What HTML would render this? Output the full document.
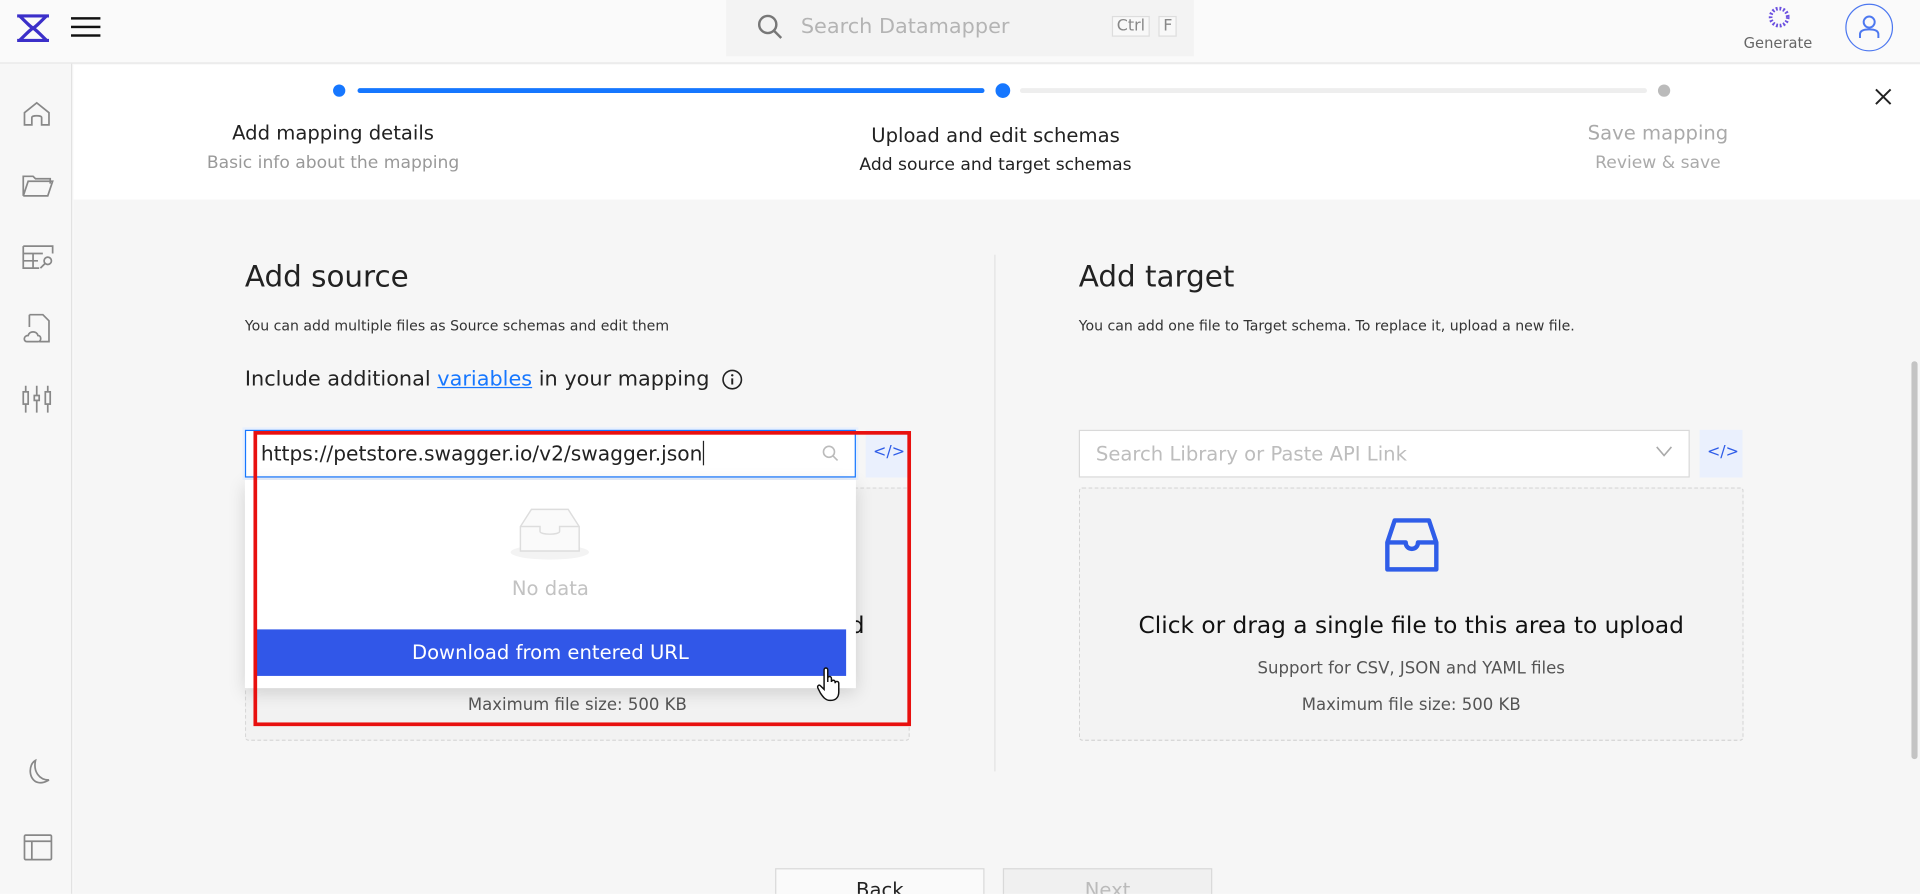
<!DOCTYPE html>
<html><head><meta charset="utf-8"><style>
*{box-sizing:border-box;margin:0;padding:0}
html,body{width:1920px;height:894px;overflow:hidden;background:#fafafa;font-family:"DejaVu Sans","Liberation Sans",sans-serif}
#w{position:absolute;left:0;top:0;width:1568px;height:730px;overflow:hidden;transform:scale(1.22449);transform-origin:0 0;background:#fafafa}
.a{position:absolute}
.t{position:absolute;white-space:nowrap}
</style></head><body><div id="w">
<div class="a" style="left:0;top:0;width:1568px;height:52px;background:#fafafa;border-bottom:1px solid #e4e4e4"></div>
<svg class="a" style="left:13px;top:10px" width="28" height="26" viewBox="0 0 28 26"><path d="M1 3 H27 M1 23 H27 M3 3 C10 10 12 12 14 13 C16 14 18 16 25 23 M25 3 C18 10 16 12 14 13 C12 14 10 16 3 23" stroke="#3b2fc9" stroke-width="2.6" fill="none"/></svg>
<div class="a" style="left:58px;top:14px;width:24px;height:2px;background:#111"></div>
<div class="a" style="left:58px;top:21px;width:24px;height:2px;background:#111"></div>
<div class="a" style="left:58px;top:28px;width:24px;height:2px;background:#111"></div>
<div class="a" style="left:593px;top:0;width:382px;height:46px;background:#f3f3f3"></div>
<svg class="a" style="left:618px;top:11px" width="22" height="22" viewBox="0 0 22 22"><circle cx="9" cy="9" r="7" stroke="#777" stroke-width="2" fill="none"/><path d="M14 14 L20 20" stroke="#777" stroke-width="2"/></svg>
<div class="t" style="left:654px;top:12px;font-size:17px;color:#b4b4b4">Search Datamapper</div>
<div class="t" style="left:908px;top:13px;font-size:13px;color:#888;border:1px solid #ddd;padding:0 3px;background:#f8f8f8">Ctrl</div>
<div class="t" style="left:946px;top:13px;font-size:13px;color:#888;border:1px solid #ddd;padding:0 3px;background:#f8f8f8">F</div>
<svg class="a" style="left:1442px;top:3px" width="22" height="22" viewBox="0 0 22 22"><circle cx="11" cy="11" r="7" stroke="#6a4fe0" stroke-width="3" stroke-dasharray="1.5 1.5" fill="none"/></svg>
<div class="t" style="left:1424px;top:28px;font-size:12px;color:#666">Generate</div>
<div class="a" style="left:1507px;top:3px;width:39px;height:39px;border:1.5px solid #4d78f0;border-radius:50%"></div>
<svg class="a" style="left:1514px;top:10px" width="25" height="25" viewBox="0 0 25 25"><circle cx="12.5" cy="8" r="4.5" stroke="#4d78f0" stroke-width="1.6" fill="none"/><path d="M5 21 V18 C5 15 8 14 12.5 14 C17 14 20 15 20 18 V21" stroke="#4d78f0" stroke-width="1.6" fill="none"/></svg>
<div class="a" style="left:0;top:52px;width:59px;height:678px;background:#f7f7f7;border-right:1px solid #e2e2e2"></div>
<svg class="a" style="left:17px;top:80px" width="26" height="26" viewBox="0 0 26 26" fill="none" stroke="#888" stroke-width="1.4"><path d="M3 22 V12 L13 4 L23 12 V22 H17 V16 C17 14 9 14 9 16 V22 Z"/></svg>
<svg class="a" style="left:17px;top:140px" width="28" height="22" viewBox="0 0 28 22" fill="none" stroke="#888" stroke-width="1.4"><path d="M2 20 V4 H10 L12 6 H24 V10 M2 20 H22 L26 8 H6 L2 20"/></svg>
<svg class="a" style="left:17px;top:199px" width="28" height="22" viewBox="0 0 28 22" fill="none" stroke="#888" stroke-width="1.4"><path d="M2 2 H26 V8 M2 2 V20 H15 M2 8 H18 M2 14 H14 M10 8 V20"/><circle cx="22" cy="14" r="3"/><path d="M20 16 L16 20"/></svg>
<svg class="a" style="left:18px;top:255px" width="26" height="26" viewBox="0 0 26 26" fill="none" stroke="#888" stroke-width="1.4"><path d="M6 2 H17 L22 7 V24 H14 M6 2 V12"/><path d="M4 24 C1 24 1 19 5 19 C6 15 12 15 13 19 C16 19 16 24 13 24 Z"/></svg>
<svg class="a" style="left:17px;top:314px" width="26" height="24" viewBox="0 0 26 24" fill="none" stroke="#888" stroke-width="1.4"><path d="M4 1 V23 M13 1 V23 M22 1 V23"/><rect x="2" y="6" width="4" height="10" fill="#f7f7f7"/><rect x="11" y="9" width="4" height="4" fill="#f7f7f7"/><rect x="20" y="6" width="4" height="10" fill="#f7f7f7"/></svg>
<svg class="a" style="left:19px;top:619px" width="24" height="24" viewBox="0 0 24 24" fill="none" stroke="#888" stroke-width="1.4"><path d="M10 2 C4 5 4 18 12 20 C16 21 19 19 21 18 C13 18 8 11 10 2 Z"/></svg>
<svg class="a" style="left:18px;top:680px" width="26" height="24" viewBox="0 0 26 24" fill="none" stroke="#888" stroke-width="1.4"><rect x="2" y="2" width="22" height="20" rx="1"/><path d="M2 7 H24 M8 7 V22"/></svg>
<div class="a" style="left:60px;top:53px;width:1508px;height:110px;background:#fff"></div>
<div class="a" style="left:272px;top:69px;width:10px;height:10px;border-radius:50%;background:#1677ff"></div>
<div class="a" style="left:292px;top:72px;width:512px;height:4px;border-radius:2px;background:#1677ff"></div>
<div class="a" style="left:813px;top:68px;width:12px;height:12px;border-radius:50%;background:#1677ff"></div>
<div class="a" style="left:833px;top:72px;width:512px;height:4px;border-radius:2px;background:#eee"></div>
<div class="a" style="left:1354px;top:69px;width:10px;height:10px;border-radius:50%;background:#bbb"></div>
<div class="t" style="left:132px;top:99px;width:280px;text-align:center;font-size:16px;color:#222">Add mapping details</div>
<div class="t" style="left:132px;top:125px;width:280px;text-align:center;font-size:14px;color:#999">Basic info about the mapping</div>
<div class="t" style="left:663px;top:101px;width:300px;text-align:center;font-size:16px;color:#222">Upload and edit schemas</div>
<div class="t" style="left:663px;top:127px;width:300px;text-align:center;font-size:14px;color:#222">Add source and target schemas</div>
<div class="t" style="left:1254px;top:99px;width:200px;text-align:center;font-size:16px;color:#aaa">Save mapping</div>
<div class="t" style="left:1254px;top:125px;width:200px;text-align:center;font-size:14px;color:#aaa">Review &amp; save</div>
<svg class="a" style="left:1531px;top:72px" width="14" height="14" viewBox="0 0 14 14"><path d="M1 1 L13 13 M13 1 L1 13" stroke="#222" stroke-width="1.6"/></svg>
<div class="a" style="left:60px;top:163px;width:1508px;height:567px;background:#f6f6f6"></div>
<div class="a" style="left:1561px;top:295px;width:5px;height:325px;background:#c4c4c4;border-radius:3px"></div>
<div class="a" style="left:812px;top:208px;width:1px;height:422px;background:#e2e2e2"></div>
<div class="t" style="left:200px;top:212px;font-size:24px;color:#222">Add source</div>
<div class="t" style="left:200px;top:259px;font-size:11.5px;color:#333">You can add multiple files as Source schemas and edit them</div>
<div class="t" style="left:200px;top:300px;font-size:17px;color:#222">Include additional <span style="color:#1677ff;text-decoration:underline">variables</span> in your mapping</div>
<svg class="a" style="left:589px;top:301px" width="18" height="18" viewBox="0 0 18 18"><circle cx="9" cy="9" r="7.5" stroke="#222" stroke-width="1.3" fill="none"/><path d="M9 8 V13" stroke="#222" stroke-width="1.6"/><circle cx="9" cy="5.5" r="1" fill="#222"/></svg>
<div class="t" style="left:881px;top:212px;font-size:24px;color:#222">Add target</div>
<div class="t" style="left:881px;top:259px;font-size:11.5px;color:#333">You can add one file to Target schema. To replace it, upload a new file.</div>
<div class="a" style="left:200px;top:398px;width:543px;height:207px;background:#f2f2f2;border:1px dashed #d8d8d8;border-radius:3px"></div>
<div class="t" style="left:200px;top:568px;width:543px;text-align:center;font-size:13.5px;color:#555">Maximum file size: 500 KB</div>
<div class="t" style="left:694px;top:500px;font-size:19px;color:#111">d</div>
<div class="a" style="left:198px;top:349px;width:503px;height:43px;background:#e8f0fd"></div>
<div class="a" style="left:200px;top:351px;width:499px;height:39px;background:#fff;border:1px solid #1677ff"></div>
<div class="t" style="left:213px;top:360px;font-size:16.5px;color:#222">https://petstore.swagger.io/v2/swagger.json<span style="display:inline-block;width:1px;height:20px;background:#222;vertical-align:-4px"></span></div>
<svg class="a" style="left:671px;top:363px" width="14" height="14" viewBox="0 0 14 14"><circle cx="6" cy="6" r="4.5" stroke="#bbb" stroke-width="1.3" fill="none"/><path d="M9.3 9.3 L13 13" stroke="#bbb" stroke-width="1.3"/></svg>
<div class="a" style="left:707px;top:351px;width:35px;height:39px;background:#eaf0fd"></div>
<div class="t" style="left:713px;top:362px;font-size:13px;color:#2f5de8">&lt;/&gt;</div>
<div class="a" style="left:200px;top:392px;width:499px;height:170px;background:#fff;box-shadow:0 4px 14px rgba(0,0,0,.15)"></div>
<svg class="a" style="left:412px;top:410px" width="74" height="50" viewBox="0 0 74 50"><ellipse cx="37" cy="41" rx="32" ry="6" fill="#f3f3f3"/><path d="M13 40 V20 L22 6 H52 L61 20 V40 Z" fill="#fafafa" stroke="#ddd" stroke-width="1.2"/><path d="M13 20 H29 V24 C29 27 45 27 45 24 V20 H61" fill="none" stroke="#ddd" stroke-width="1.2"/></svg>
<div class="t" style="left:200px;top:471px;width:499px;text-align:center;font-size:16px;color:#c2c2c2">No data</div>
<div class="a" style="left:208px;top:514px;width:483px;height:38px;background:#3157e8"></div>
<div class="t" style="left:208px;top:523px;width:483px;text-align:center;font-size:16px;color:#fff">Download from entered URL</div>
<svg class="a" style="left:667px;top:544px" width="22" height="30" viewBox="0 0 22 30"><path d="M6 3 C6 1 9 1 9 3 V13 L9 10 C9 8 12 8 12 10 V13 C12 11 15 11 15 13 V14 C15 12 18 12 18 14 V21 C18 26 15 28 11 28 C7 28 5 25 3 22 L1 18 C0 16 2 15 3 16 L6 19 Z" fill="#fff" stroke="#111" stroke-width="1.2"/></svg>
<div class="a" style="left:207px;top:352px;width:537px;height:241px;border:3px solid #e8100f"></div>
<div class="a" style="left:881px;top:351px;width:499px;height:39px;background:#fff;border:1px solid #d9d9d9"></div>
<div class="t" style="left:895px;top:361px;font-size:16px;color:#bdbdbd">Search Library or Paste API Link</div>
<svg class="a" style="left:1352px;top:364px" width="14" height="10" viewBox="0 0 14 10"><path d="M1 1 L7 8 L13 1" stroke="#aaa" stroke-width="1.3" fill="none"/></svg>
<div class="a" style="left:1388px;top:351px;width:35px;height:39px;background:#eaf0fd"></div>
<div class="t" style="left:1394px;top:362px;font-size:13px;color:#2f5de8">&lt;/&gt;</div>
<div class="a" style="left:881px;top:398px;width:543px;height:207px;background:#f3f3f3;border:1px dashed #d4d4d4;border-radius:3px"></div>
<svg class="a" style="left:1130px;top:422px" width="46" height="46" viewBox="0 0 46 46"><path d="M3 43 V21 L9 3 H37 L43 21 V43 Z M3 21 H18 C18 28 28 28 28 21 H43" fill="none" stroke="#2f5de8" stroke-width="3.6" stroke-linejoin="round"/></svg>
<div class="t" style="left:881px;top:500px;width:543px;text-align:center;font-size:19px;color:#111">Click or drag a single file to this area to upload</div>
<div class="t" style="left:881px;top:538px;width:543px;text-align:center;font-size:13.5px;color:#555">Support for CSV, JSON and YAML files</div>
<div class="t" style="left:881px;top:568px;width:543px;text-align:center;font-size:13.5px;color:#555">Maximum file size: 500 KB</div>
<div class="a" style="left:633px;top:709px;width:171px;height:40px;background:#fafafa;border:1px solid #d9d9d9"></div>
<div class="t" style="left:633px;top:717px;width:171px;text-align:center;font-size:16px;color:#222">Back</div>
<div class="a" style="left:819px;top:709px;width:171px;height:40px;background:#f0f0f0;border:1px solid #d9d9d9"></div>
<div class="t" style="left:819px;top:717px;width:171px;text-align:center;font-size:16px;color:#bbb">Next</div>
</div></body></html>
